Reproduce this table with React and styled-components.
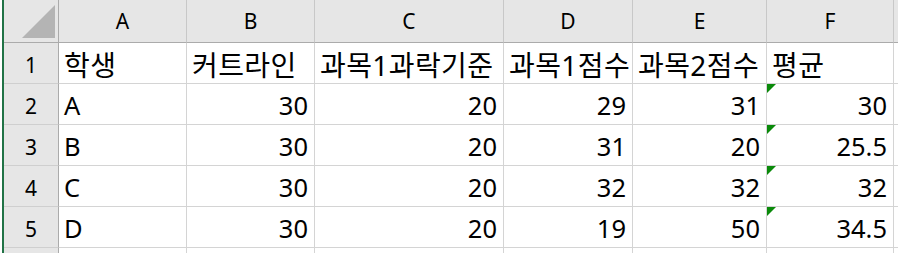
import React from "react";
import styled, { createGlobalStyle } from "styled-components";

const GlobalStyle = createGlobalStyle`
  html, body {
    margin: 0;
    padding: 0;
    background: #fff;
  }
  body {
    font-family: "Noto Sans", "Noto Sans CJK KR", sans-serif;
    color: #000;
  }
`;

const Window = styled.div`
  width: 898px;
  height: 253px;
  overflow: hidden;
  padding-left: 2px;
  box-sizing: border-box;
  background: #fff;
`;

const Sheet = styled.div`
  display: grid;
  grid-template-columns: 55px 128px 128px 189px 129px 134px 127px 1fr;
  grid-template-rows: 43px repeat(6, 41px);
  border-left: 2px solid #217346;
  height: 100%;
`;

const Corner = styled.div`
  background: #e6e6e6;
  border-right: 1px solid #ababab;
  border-bottom: 1px solid #ababab;
  box-sizing: border-box;
  display: flex;
  align-items: flex-end;
  justify-content: flex-end;
  padding: 0 3px 4px 0;
`;

const CornerMark = styled.div`
  width: 0;
  height: 0;
  border-style: solid;
  border-width: 0 0 33px 33px;
  border-color: transparent transparent #b4b4b4 transparent;
`;

const ColHead = styled.div`
  background: #e6e6e6;
  border-right: 1px solid #c8c8c8;
  border-bottom: 1px solid #ababab;
  box-sizing: border-box;
  display: flex;
  align-items: center;
  justify-content: center;
  font-size: 21px;
  line-height: 1;
  padding-top: 1px;
`;

const RowHead = styled.div`
  background: #e6e6e6;
  border-right: 1px solid #ababab;
  border-bottom: 1px solid #cfcfcf;
  box-sizing: border-box;
  display: flex;
  align-items: center;
  justify-content: center;
  font-size: 21px;
  line-height: 1;
  padding-top: 4px;
`;

const Cell = styled.div`
  position: relative;
  border-right: 1px solid #d4d4d4;
  border-bottom: 1px solid #d4d4d4;
  box-sizing: border-box;
  display: flex;
  align-items: center;
  justify-content: ${(p) => (p.$right ? "flex-end" : "flex-start")};
  padding: 4px 6px 0 5px;
  font-size: ${(p) => (p.$korean ? "28px" : "25.5px")};
  letter-spacing: ${(p) => (p.$korean ? "0.4px" : "0")};
  line-height: 1;
  white-space: nowrap;
`;

const Flag = styled.span`
  position: absolute;
  top: 0;
  left: 0;
  width: 0;
  height: 0;
  border-style: solid;
  border-width: 9px 9px 0 0;
  border-color: #0a8a0a transparent transparent transparent;
`;

const columns = ["A", "B", "C", "D", "E", "F", ""];

const rows = [
  ["학생", "커트라인", "과목1과락기준", "과목1점수", "과목2점수", "평균"],
  ["A", 30, 20, 29, 31, 30],
  ["B", 30, 20, 31, 20, 25.5],
  ["C", 30, 20, 32, 32, 32],
  ["D", 30, 20, 19, 50, 34.5],
];

export default function App() {
  return (
    <>
      <GlobalStyle />
      <Window>
        <Sheet>
          <Corner>
            <CornerMark />
          </Corner>
          {columns.map((c, i) => (
            <ColHead key={"h" + i}>{c}</ColHead>
          ))}
          {rows.map((row, r) => (
            <React.Fragment key={r}>
              <RowHead>{r + 1}</RowHead>
              {row.map((v, c) => (
                <Cell key={c} $right={typeof v === "number"} $korean={r === 0}>
                  {c === 5 && r > 0 && <Flag />}
                  {v}
                </Cell>
              ))}
              <Cell />
            </React.Fragment>
          ))}
          {/* partly visible row below the data */}
          <RowHead />
          {columns.map((c, i) => (
            <Cell key={"f" + i} />
          ))}
        </Sheet>
      </Window>
    </>
  );
}
